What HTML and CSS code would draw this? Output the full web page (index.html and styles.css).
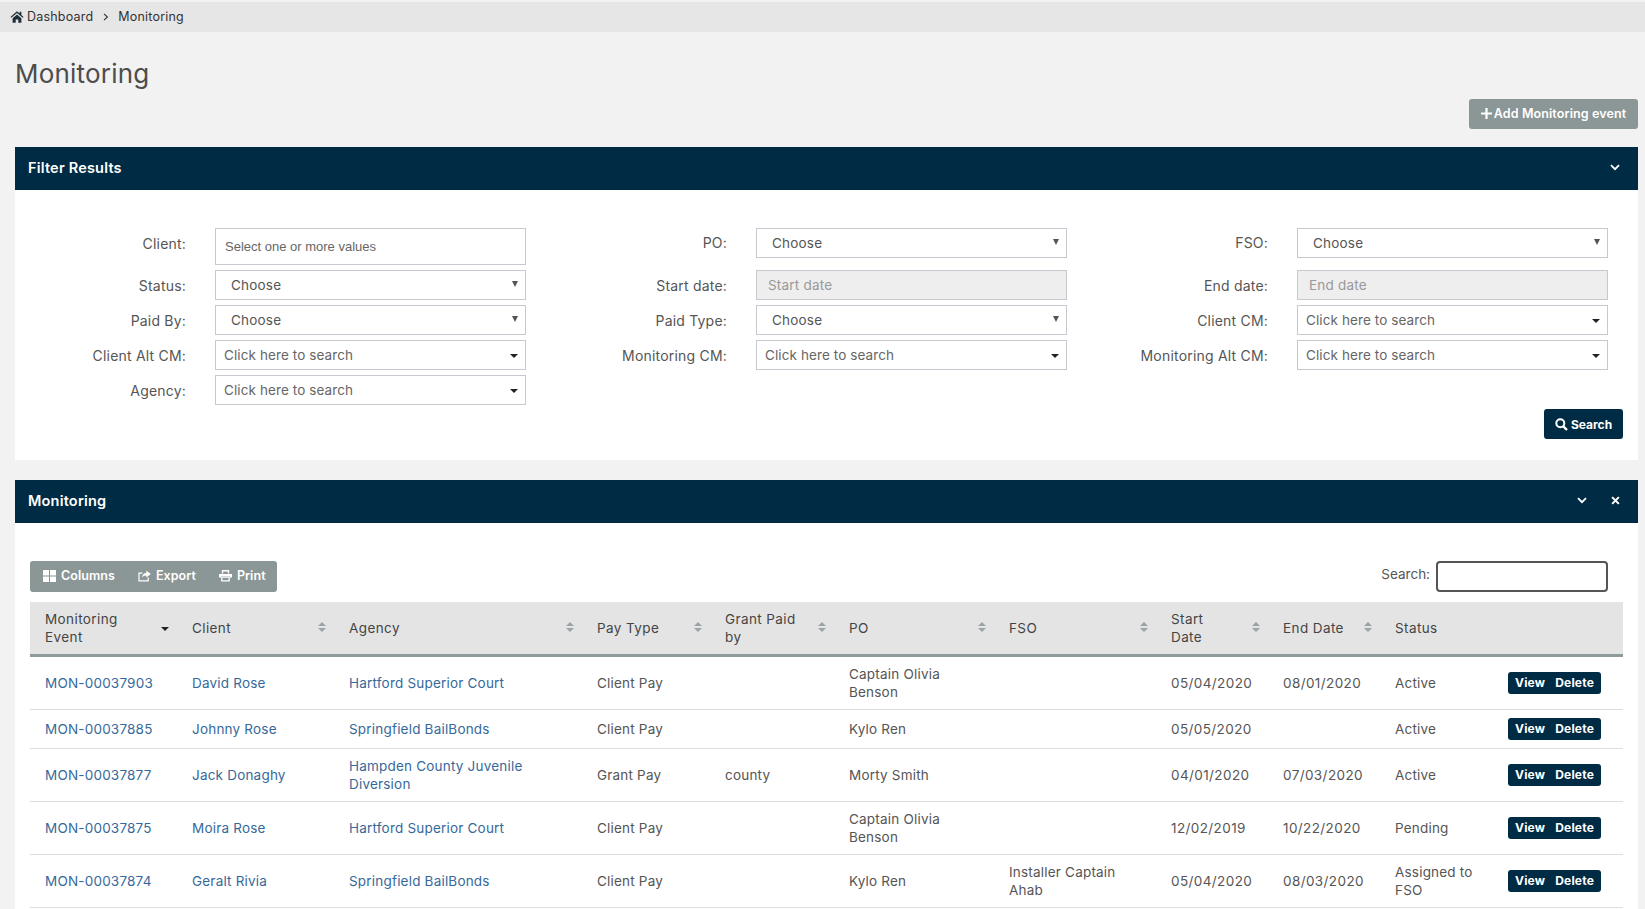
FILE: index.html
```html
<!DOCTYPE html>
<html lang="en">
<head>
<meta charset="utf-8">
<title>Monitoring</title>
<link rel="stylesheet" href="styles.css">
</head>
<body>
<div class="page">
  <nav class="crumbs">
    <svg class="i-home" viewBox="0 0 16 14"><path d="M8 1 .5 7.500l1 1L8 3l6.500 5.500 1-1L13 5.300V1.500h-2v2.100zM3 9v5h3.500v-3.500h3V14H13V9L8 4.600z"/></svg>
    <span>Dashboard</span><svg class="i-sep" viewBox="0 0 6 8"><path d="M1 .8 4.400 4 1 7.200" fill="none" stroke="#333" stroke-width="1.100"/></svg><span>Monitoring</span>
  </nav>
  <h1 class="title">Monitoring</h1>
  <div class="actions">
    <button class="btn-add"><svg class="i-plus" viewBox="0 0 12 12"><path d="M4.800 0h2.400v4.800H12v2.400H7.200V12H4.800V7.200H0V4.800h4.800z"/></svg>Add Monitoring event</button>
  </div>

  <section class="panel filter">
    <header class="panel-head">
      <h2>Filter Results</h2>
      <div class="tools"><svg class="i-chev" viewBox="0 0 10 7"><path d="M1 1.200 5 5.200l4-4" fill="none" stroke="#fff" stroke-width="1.800"/></svg></div>
    </header>
    <div class="filter-body">
      <form class="form-grid">
        <label class="first">Client:</label><div class="multi">Select one or more values</div>
        <label class="top">PO:</label><div class="sel">Choose</div>
        <label class="top">FSO:</label><div class="sel">Choose</div>

        <label>Status:</label><div class="sel">Choose</div>
        <label>Start date:</label><div class="date">Start date</div>
        <label>End date:</label><div class="date">End date</div>

        <label>Paid By:</label><div class="sel">Choose</div>
        <label>Paid Type:</label><div class="sel">Choose</div>
        <label>Client CM:</label><div class="combo">Click here to search</div>

        <label>Client Alt CM:</label><div class="combo">Click here to search</div>
        <label>Monitoring CM:</label><div class="combo">Click here to search</div>
        <label>Monitoring Alt CM:</label><div class="combo">Click here to search</div>

        <label>Agency:</label><div class="combo">Click here to search</div>
      </form>
      <div class="search-row">
        <button class="btn-search"><svg class="i-search" viewBox="0 0 13 13"><circle cx="5.300" cy="5.300" r="4" fill="none" stroke="#fff" stroke-width="2"/><path d="M8.300 8.300 12 12" stroke="#fff" stroke-width="2.400"/></svg>Search</button>
      </div>
    </div>
  </section>

  <section class="panel list">
    <header class="panel-head">
      <h2>Monitoring</h2>
      <div class="tools">
        <svg class="i-chev" viewBox="0 0 10 7"><path d="M1 1.200 5 5.200l4-4" fill="none" stroke="#fff" stroke-width="1.800"/></svg>
        <svg class="i-x" viewBox="0 0 8 8"><path d="M1 1l6 6M7 1 1 7" stroke="#fff" stroke-width="1.800"/></svg>
      </div>
    </header>
    <div class="list-body">
      <div class="table-bar">
        <div class="btn-bar">
          <span class="bar-btn"><svg class="i-cols" viewBox="0 0 13 12"><path d="M0 0h6v5.500H0zM7 0h6v5.500H7zM0 6.500h6V12H0zM7 6.500h6V12H7z"/></svg>Columns</span>
          <span class="bar-btn"><svg class="i-exp" viewBox="0 0 13 12"><path d="M10.200 7.500V10.800H1V3.200H4.500" fill="none" stroke="#fff" stroke-width="1.200"/><path d="M8.300 .6 12.800 4 8.300 7.400V5.400C6.300 5.400 4.800 6 4 8 4 5 5.800 3 8.300 2.700z"/></svg>Export</span>
          <span class="bar-btn"><svg class="i-print" viewBox="0 0 13 12"><path d="M3.500 3.500V.8h6v2.700" fill="none" stroke="#fff" stroke-width="1.400"/><path d="M0 4h13v3.500h-2V6.300H2v1.200H0z"/><path d="M2.800 7.200h7.400v3.600H2.800z" fill="none" stroke="#fff" stroke-width="1.300"/></svg>Print</span>
        </div>
        <label class="tsearch">Search:<span class="tsearch-box"></span></label>
      </div>
      <table class="grid">
        <colgroup>
          <col class="c1"><col class="c2"><col class="c3"><col class="c4"><col class="c5"><col class="c6"><col class="c7"><col class="c8"><col class="c9"><col class="c10"><col class="c11">
        </colgroup>
        <thead>
          <tr>
            <th class="sorted">Monitoring Event</th>
            <th class="sortable">Client</th>
            <th class="sortable">Agency</th>
            <th class="sortable">Pay Type</th>
            <th class="sortable">Grant Paid by</th>
            <th class="sortable">PO</th>
            <th class="sortable">FSO</th>
            <th class="sortable">Start<br>Date</th>
            <th class="sortable">End Date</th>
            <th>Status</th>
            <th></th>
          </tr>
        </thead>
        <tbody>
          <tr><td><a>MON-00037903</a></td><td><a>David Rose</a></td><td><a>Hartford Superior Court</a></td><td>Client Pay</td><td></td><td>Captain Olivia Benson</td><td></td><td class="d">05/04/2020</td><td class="d">08/01/2020</td><td>Active</td><td><span class="row-btns"><b>View</b><b>Delete</b></span></td></tr>
          <tr><td><a>MON-00037885</a></td><td><a>Johnny Rose</a></td><td><a>Springfield BailBonds</a></td><td>Client Pay</td><td></td><td>Kylo Ren</td><td></td><td class="d">05/05/2020</td><td class="d"></td><td>Active</td><td><span class="row-btns"><b>View</b><b>Delete</b></span></td></tr>
          <tr><td><a>MON-00037877</a></td><td><a>Jack Donaghy</a></td><td><a>Hampden County Juvenile Diversion</a></td><td>Grant Pay</td><td>county</td><td>Morty Smith</td><td></td><td class="d">04/01/2020</td><td class="d">07/03/2020</td><td>Active</td><td><span class="row-btns"><b>View</b><b>Delete</b></span></td></tr>
          <tr><td><a>MON-00037875</a></td><td><a>Moira Rose</a></td><td><a>Hartford Superior Court</a></td><td>Client Pay</td><td></td><td>Captain Olivia Benson</td><td></td><td class="d">12/02/2019</td><td class="d">10/22/2020</td><td>Pending</td><td><span class="row-btns"><b>View</b><b>Delete</b></span></td></tr>
          <tr><td><a>MON-00037874</a></td><td><a>Geralt Rivia</a></td><td><a>Springfield BailBonds</a></td><td>Client Pay</td><td></td><td>Kylo Ren</td><td>Installer Captain Ahab</td><td class="d">05/04/2020</td><td class="d">08/03/2020</td><td>Assigned to FSO</td><td><span class="row-btns"><b>View</b><b>Delete</b></span></td></tr>
        </tbody>
      </table>
    </div>
  </section>
</div>
</body>
</html>
```

FILE: styles.css
```css
* { box-sizing: border-box; }
html, body { margin: 0; height: 100%; }
body {
  background: #f2f2f2;
  color: #555;
  font-family: Inter, "Open Sans", sans-serif;
  font-size: 13.5px;
  line-height: 18px;
  letter-spacing: .2px;
}
.page { height: 909px; overflow: hidden; padding-top: 2px; display: flex; flex-direction: column; }
.crumbs {
  height: 30px;
  flex: none;
  background: #e6e6e6;
  color: #333;
  display: flex;
  align-items: center;
  padding-left: 10px;
  font-size: 12.500px;
}
.i-home { width: 14px; height: 13px; fill: #1f2d38; margin: 0 3px 2px 0; }
.i-sep { width: 6px; height: 8px; margin: 0 9px 0 10px; }
.title {
  margin: 0;
  padding: 26px 0 0 15px;
  height: 67px;
  flex: none;
  font-size: 26px;
  line-height: 32px;
  font-weight: 400;
  color: #4d4d4d;
}
.actions { flex: none; height: 48px; padding: 0 7px 0 0; display: flex; justify-content: flex-end; align-items: flex-start; }
.btn-add {
  width: 169px; height: 30px;
  background: #8b9696; color: #fff;
  border: 0; border-radius: 3px;
  font: 600 12.500px Inter, sans-serif;
  letter-spacing: .1px;
  display: flex; align-items: center; justify-content: center;
  padding: 0 0 2px;
}
.i-plus { width: 11px; height: 11px; fill: #fff; margin-right: 2px; }
.panel { margin: 0 7px 0 15px; background: #fff; flex: none; }
.panel.filter { height: 313px; margin-bottom: 20px; }
.panel.list { flex: 1 0 auto; }
.panel-head {
  height: 43px;
  background: #002b44;
  color: #fff;
  display: flex; align-items: center; justify-content: space-between;
  padding: 0 18px 2px 13px;
}
.panel-head h2 { margin: 0; font-size: 14.500px; font-weight: 600; }
.tools { display: flex; align-items: center; gap: 24px; }
.i-chev { width: 10px; height: 7px; }
.i-x { width: 9px; height: 9px; }
.filter-body { padding: 38px 15px 0 0; }
.form-grid {
  display: grid;
  grid-template-columns: 200px 311px 230px 311px 230px 311px;
  grid-template-rows: 37px 30px 30px 30px 30px;
  row-gap: 5px;
  align-items: start;
}
.form-grid label { text-align: right; padding: 7px 29px 0 0; color: #555; font-size: 14px; }
.form-grid label.top { padding-top: 6px; }
.form-grid label.first { padding-top: 7px; }
.multi, .sel, .date, .combo {
  height: 30px;
  border: 1px solid #c6c9cf;
  background: #fff;
  position: relative;
  line-height: 28px;
}
.multi { height: 37px; line-height: 35px; padding-left: 9px; font-family: "Liberation Sans", sans-serif; font-size: 13px; letter-spacing: 0; color: #666; }
.sel { padding-left: 15px; color: #555; }
.sel::after {
  content: ""; position: absolute; right: 7px; top: 10px;
  border: 3.500px solid transparent; border-top: 6px solid #555; border-bottom: 0;
}
.date { padding-left: 11px; background: #eee; color: #999; }
.combo { padding-left: 8px; color: #666; letter-spacing: .1px; }
.combo::after {
  content: ""; position: absolute; right: 7px; top: 13px;
  border: 4px solid transparent; border-top: 4px solid #222; border-bottom: 0;
}
.search-row { display: flex; justify-content: flex-end; margin-top: 4px; }
.btn-search {
  width: 79px; height: 30px;
  background: #002b44; color: #fff; border: 0; border-radius: 3px;
  font: 700 12px Inter, sans-serif;
  display: flex; align-items: center; justify-content: center; padding: 0;
}
.i-search { width: 13px; height: 13px; margin-right: 3px; }
.list-body { padding: 38px 15px 0; }
.table-bar { display: flex; justify-content: space-between; align-items: flex-start; height: 41px; }
.btn-bar {
  width: 247px; height: 31px;
  background: #8b9696; border-radius: 3px;
  color: #fff; font-weight: 600; font-size: 12.500px;
  letter-spacing: .05px;
  display: flex; align-items: center; padding: 0 0 1px 13px; gap: 23px;
}
.bar-btn { display: flex; align-items: center; }
.bar-btn svg { width: 13px; height: 12px; fill: #fff; margin-right: 5px; }
.tsearch { display: flex; align-items: flex-start; gap: 6px; margin-right: 15px; color: #555; line-height: 27px; letter-spacing: 0; }
.tsearch-box { width: 172px; height: 31px; border: 2px solid #555; border-radius: 4px; background: #fff; }
.grid { width: 1593px; table-layout: fixed; border-collapse: collapse; }
.c1 { width: 147px; } .c2 { width: 157px; } .c3 { width: 248px; } .c4 { width: 128px; }
.c5 { width: 124px; } .c6 { width: 160px; } .c7 { width: 162px; } .c8 { width: 112px; }
.c9 { width: 112px; } .c10 { width: 113px; } .c11 { width: 130px; }
.grid th {
  background: #e4e4e4;
  border-bottom: 3px solid #8f9a9a;
  font-weight: 400;
  text-align: left;
  color: #444;
  padding: 7px 26px 7px 15px;
  height: 53px;
  position: relative;
  letter-spacing: .4px;
}
.sortable::before {
  content: ""; position: absolute; right: 8px; top: 20px;
  border: 4px solid transparent; border-top: 0; border-bottom: 4px solid #9aa3a6;
}
.sortable::after {
  content: ""; position: absolute; right: 8px; top: 26px;
  border: 4px solid transparent; border-bottom: 0; border-top: 4px solid #9aa3a6;
}
.sorted::after {
  content: ""; position: absolute; right: 8px; top: 25px;
  border: 4.500px solid transparent; border-bottom: 0; border-top: 4.500px solid #222;
}
.grid td {
  padding: 8px 15px;
  border-bottom: 1px solid #dcdfe0;
  color: #555;
  vertical-align: middle;
}
.grid td.d { letter-spacing: .4px; }
.grid td a { color: #36699b; }
.row-btns {
  display: flex; width: 93px; height: 22px;
  background: #002b44; border-radius: 3px; color: #fff;
  font-size: 12px; align-items: center; justify-content: center; gap: 10px;
}
.row-btns b { font-weight: 700; }
```
